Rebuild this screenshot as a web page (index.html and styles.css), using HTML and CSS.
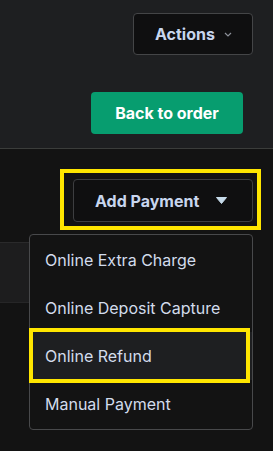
FILE: index.html
```html
<!DOCTYPE html>
<html>
<head>
<meta charset="utf-8">
<title>Order - Payments</title>
<link rel="stylesheet" href="styles.css">
</head>
<body>
<div class="header">
	<button class="btn btn-dark btn-actions" type="button">
		<span>Actions</span>
		<svg class="chev" width="8" height="5" viewBox="0 0 8 5"><polyline points="1,1 4,4 7,1" fill="none" stroke="#8c9099" stroke-width="1.2"/></svg>
	</button>
	<button class="btn btn-green" type="button">Back to order</button>
</div>
<div class="content">
	<div class="mark mark-btn">
		<button class="btn btn-dark btn-pay" type="button">
			<span>Add Payment</span>
			<svg class="caret" width="11" height="7" viewBox="0 0 11 7"><path d="M0.5 0.5 H10.5 L5.5 6.5 Z" fill="#c6dbea" stroke="#c6dbea" stroke-linejoin="round"/></svg>
		</button>
	</div>
	<div class="sidepanel"></div>
	<ul class="menu">
		<li>Online Extra Charge</li>
		<li>Online Deposit Capture</li>
		<li class="active">Online Refund<span class="mark-over"></span></li>
		<li>Manual Payment</li>
	</ul>
</div>
</body>
</html>
```

FILE: styles.css
```css
html, body {
	margin: 0;
	padding: 0;
}
body {
	background-color: #131313;
	font-family: Inter, "Noto Sans", sans-serif;
	font-size: 16px;
	color: #d2dcec;
	height: 451px;
	overflow: hidden;
}
.header {
	background-color: #1e1f21;
	border-bottom: 1px solid #3b3d3b;
	height: 135px;
	padding: 13px 20px 0 0;
	display: flex;
	flex-direction: column;
	align-items: flex-end;
	gap: 37px;
}
.btn {
	font-family: inherit;
	font-size: 16px;
	font-weight: 700;
	height: 42px;
	border-radius: 4px;
	display: flex;
	align-items: center;
	cursor: pointer;
}
.btn-dark {
	background-color: #0f0f10;
	border: 1px solid #444547;
	color: #c8d6ee;
	padding: 0 20px 0 21px;
}
.btn-dark svg {
	margin-left: auto;
}
.btn-actions {
	width: 120px;
}
.btn-actions .chev {
	margin-top: 1px;
}
.btn-green {
	background-color: #079d6f;
	border: 0;
	color: #ffffff;
	width: 152px;
	justify-content: center;
	padding: 0;
	margin-right: 10px;
}
.content {
	position: relative;
	padding-top: 20px;
	display: flex;
	flex-direction: column;
	align-items: flex-end;
}
.mark {
	border: 4px solid #ffe600;
}
.mark-btn {
	padding: 6px 4px 4px 9px;
	margin-right: 12px;
}
.btn-pay {
	width: 180px;
	height: 43px;
	border-color: #3d3e40;
	padding-right: 25px;
}
.sidepanel {
	align-self: flex-start;
	width: 40px;
	height: 59px;
	margin-top: 12px;
	background-color: #1d1d1e;
	border-top: 1px solid #2a2a2b;
	border-bottom: 1px solid #262627;
}
.menu {
	position: absolute;
	top: 85px;
	right: 20px;
	width: 222px;
	margin: 0;
	padding: 1px 0;
	list-style: none;
	background-color: #131313;
	border: 1px solid #48494b;
	border-radius: 4px;
}
.menu li {
	position: relative;
	height: 48px;
	line-height: 48px;
	padding-left: 15px;
	white-space: nowrap;
}
.menu li.active {
	background-color: #1e1f21;
}
.mark-over {
	position: absolute;
	left: -1px;
	right: 2px;
	top: -4px;
	bottom: -3px;
	border: 4px solid #ffe600;
}
```
